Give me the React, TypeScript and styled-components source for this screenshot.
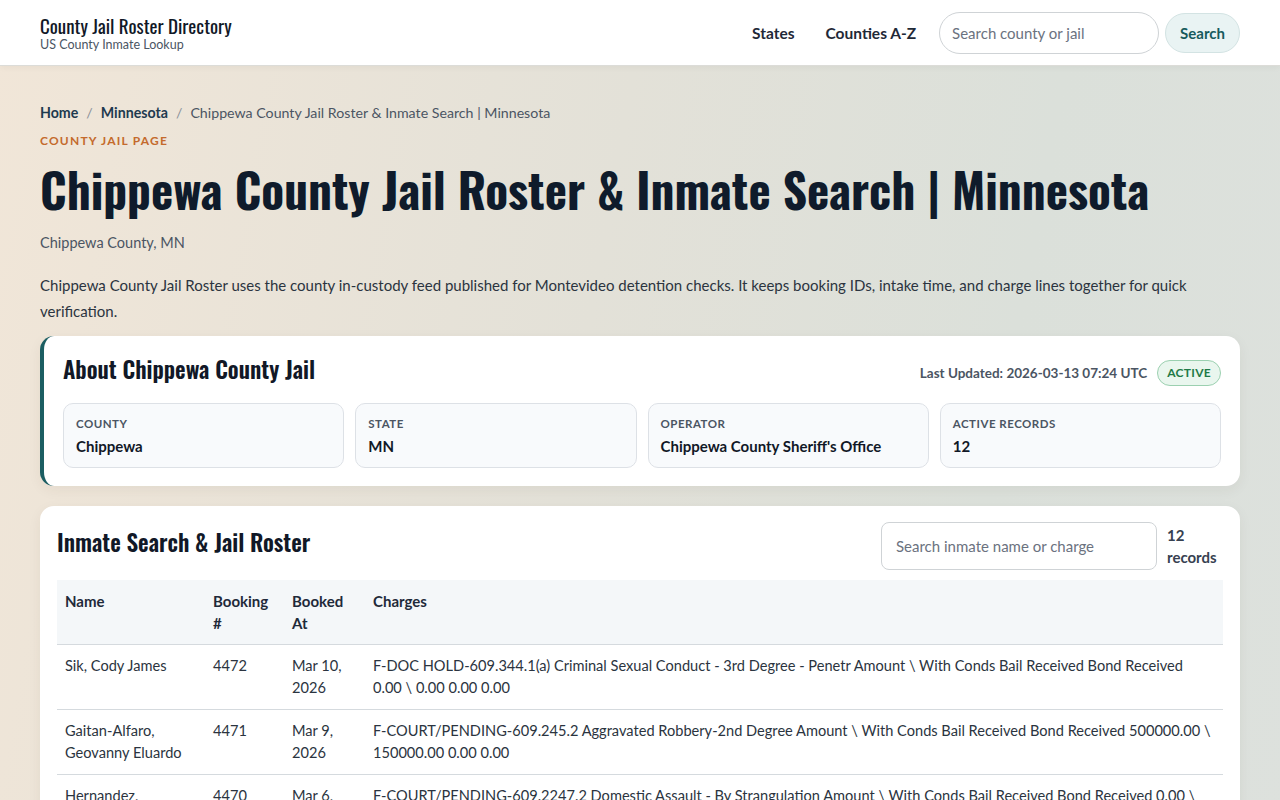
import React from 'react';
import styled, { createGlobalStyle } from 'styled-components';

const GlobalStyle = createGlobalStyle`
  * { box-sizing: border-box; }
  html, body { margin: 0; padding: 0; }
  body {
    font-family: 'Lato', 'Noto Sans', sans-serif;
    color: #1f2937;
    background: linear-gradient(100deg, #f1e6d8 0%, #e3e1d8 45%, #dbe0da 75%, #dde1dd 100%);
    min-height: 100vh;
  }
`;

const HEAD = `'Oswald', 'DejaVu Sans Condensed', 'Liberation Sans', sans-serif`;

const Header = styled.header`
  height: 66px;
  background: #ffffff;
  border-bottom: 1px solid #dcdcd8;
  box-shadow: 0 2px 6px rgba(0, 0, 0, 0.04);
  display: flex;
  align-items: center;
  justify-content: space-between;
  padding: 0 40px;
`;

const Brand = styled.div`
  display: flex;
  flex-direction: column;
`;

const BrandTitle = styled.span`
  font-family: ${HEAD};
  font-size: 19px;
  font-weight: 400;
  line-height: 24px;
  color: #111827;
`;

const BrandSub = styled.span`
  font-size: 12.5px;
  line-height: 16px;
  color: #4b5563;
`;

const Nav = styled.nav`
  display: flex;
  align-items: center;
`;

const NavLink = styled.a`
  font-size: 15.5px;
  font-weight: 700;
  color: #1f2937;
  text-decoration: none;
  margin-left: 31px;
`;

const NavForm = styled.form`
  display: flex;
  align-items: center;
  gap: 6px;
  margin-left: 23px;
`;

const PillInput = styled.input`
  width: 220px;
  height: 42px;
  border: 1px solid #cfd3d6;
  border-radius: 21px;
  padding: 0 12px;
  font-family: inherit;
  font-size: 15px;
  color: #1f2937;
  outline: none;
  &::placeholder { color: #6b7280; }
`;

const PillButton = styled.button`
  height: 40px;
  padding: 0 14px;
  border: 1px solid #d3e3e3;
  border-radius: 20px;
  background: #e9f3f3;
  color: #175a5c;
  font-family: inherit;
  font-size: 15px;
  font-weight: 700;
`;

const Main = styled.main`
  padding: 36px 40px 40px;
`;

const Crumbs = styled.div`
  font-size: 14.2px;
  line-height: 22px;
  color: #4b5563;
  display: flex;
  gap: 8px;
`;

const Crumb = styled.a`
  font-weight: 700;
  color: #1e3a4f;
  text-decoration: none;
`;

const Sep = styled.span`
  color: #8a9099;
`;

const Eyebrow = styled.div`
  margin-top: 9px;
  font-size: 12px;
  font-weight: 700;
  letter-spacing: 1.2px;
  color: #c46a2c;
  line-height: 16px;
`;

const Title = styled.h1`
  margin: 8px 0 0;
  font-family: ${HEAD};
  font-size: 47.3px;
  line-height: 64px;
  font-weight: 700;
  color: #0f1b2b;
  white-space: nowrap;
`;

const Location = styled.div`
  margin-top: 11px;
  font-size: 14.5px;
  line-height: 22px;
  color: #4b5563;
`;

const Intro = styled.p`
  margin: 18px 0 0;
  font-size: 15px;
  line-height: 26px;
  color: #2b3440;
  max-width: 1170px;
`;

const Card = styled.section<{ $accent?: boolean }>`
  margin-top: ${p => (p.$accent ? '12px' : '20px')};
  background: #ffffff;
  border-radius: 14px;
  border-left: ${p => (p.$accent ? '4px solid #1c5e62' : 'none')};
  box-shadow: 0 4px 14px rgba(60, 50, 30, 0.06);
  padding: ${p => (p.$accent ? '16px 19px 18px 19px' : '16px 17px 0')};
  overflow: hidden;
`;

const CardHead = styled.div<{ $top?: boolean }>`
  display: flex;
  align-items: ${p => (p.$top ? 'flex-start' : 'center')};
  justify-content: space-between;
`;

const CardTitle = styled.h2<{ $shift?: number }>`
  margin: ${p => p.$shift ?? 0}px 0 0;
  font-family: ${HEAD};
  font-size: 23px;
  line-height: 34px;
  font-weight: 600;
  color: #111827;
`;

const Meta = styled.div`
  display: flex;
  align-items: center;
  gap: 10px;
  margin-top: 8px;
`;

const Updated = styled.span`
  font-size: 13.5px;
  font-weight: 700;
  color: #4b5563;
`;

const Badge = styled.span`
  font-size: 12px;
  font-weight: 700;
  letter-spacing: 0.3px;
  color: #1f7a47;
  background: #e9f6ee;
  border: 1px solid #9bd0b0;
  border-radius: 13px;
  padding: 5px 9px;
  line-height: 14px;
`;

const Stats = styled.div`
  margin-top: 17px;
  display: grid;
  grid-template-columns: repeat(4, 1fr);
  gap: 11px;
`;

const Stat = styled.div`
  background: #f8fafc;
  border: 1px solid #dde1e6;
  border-radius: 10px;
  height: 65px;
  padding: 12px 12px;
`;

const StatLabel = styled.div`
  font-size: 11.5px;
  font-weight: 700;
  letter-spacing: 0.5px;
  color: #4b5563;
  line-height: 16px;
`;

const StatValue = styled.div`
  margin-top: 4px;
  font-size: 15px;
  font-weight: 700;
  color: #111827;
  line-height: 20px;
`;

const RosterTools = styled.div`
  display: flex;
  align-items: center;
  gap: 10px;
`;

const SearchBox = styled.input`
  width: 276px;
  height: 48px;
  border: 1px solid #cfd3d6;
  border-radius: 8px;
  padding: 0 14px;
  font-family: inherit;
  font-size: 15px;
  outline: none;
  &::placeholder { color: #6b7280; }
`;

const Count = styled.span`
  font-size: 15px;
  font-weight: 700;
  line-height: 22px;
  color: #374151;
  width: 56px;
`;

const Table = styled.table`
  margin-top: 10px;
  width: 100%;
  border-collapse: collapse;
  font-size: 14.6px;
  line-height: 22px;
`;

const Th = styled.th<{ $w?: number }>`
  width: ${p => (p.$w ? `${p.$w}px` : 'auto')};
  text-align: left;
  vertical-align: top;
  padding: 10px 8px;
  background: #f4f7f9;
  font-weight: 700;
  font-size: 15px;
  color: #1f2a3a;
  border-bottom: 1px solid #d5dade;
`;

const Td = styled.td`
  vertical-align: top;
  padding: 10px 8px;
  color: #2b3440;
  border-bottom: 1px solid #d5dade;
`;

const stats = [
  { label: 'County', value: 'Chippewa' },
  { label: 'State', value: 'MN' },
  { label: 'Operator', value: "Chippewa County Sheriff's Office" },
  { label: 'Active Records', value: '12' },
];

const rows = [
  {
    name: 'Sik, Cody James',
    id: '4472',
    date: 'Mar 10, 2026',
    charges: 'F-DOC HOLD-609.344.1(a) Criminal Sexual Conduct - 3rd Degree - Penetr Amount \\ With Conds Bail Received Bond Received 0.00 \\ 0.00 0.00 0.00',
  },
  {
    name: 'Gaitan-Alfaro, Geovanny Eluardo',
    id: '4471',
    date: 'Mar 9, 2026',
    charges: 'F-COURT/PENDING-609.245.2 Aggravated Robbery-2nd Degree Amount \\ With Conds Bail Received Bond Received 500000.00 \\ 150000.00 0.00 0.00',
  },
  {
    name: 'Hernandez, Christopher Lee',
    id: '4470',
    date: 'Mar 6, 2026',
    charges: 'F-COURT/PENDING-609.2247.2 Domestic Assault - By Strangulation Amount \\ With Conds Bail Received Bond Received 0.00 \\ 0.00 0.00 0.00',
  },
];

export default function App() {
  return (
    <>
      <GlobalStyle />
      <Header>
        <Brand>
          <BrandTitle>County Jail Roster Directory</BrandTitle>
          <BrandSub>US County Inmate Lookup</BrandSub>
        </Brand>
        <Nav>
          <NavLink href='#'>States</NavLink>
          <NavLink href='#'>Counties A-Z</NavLink>
          <NavForm onSubmit={e => e.preventDefault()}>
            <PillInput placeholder='Search county or jail' />
            <PillButton type='submit'>Search</PillButton>
          </NavForm>
        </Nav>
      </Header>
      <Main>
        <Crumbs>
          <Crumb href='#'>Home</Crumb>
          <Sep>/</Sep>
          <Crumb href='#'>Minnesota</Crumb>
          <Sep>/</Sep>
          <span>Chippewa County Jail Roster &amp; Inmate Search | Minnesota</span>
        </Crumbs>
        <Eyebrow>COUNTY JAIL PAGE</Eyebrow>
        <Title>Chippewa County Jail Roster &amp; Inmate Search | Minnesota</Title>
        <Location>Chippewa County, MN</Location>
        <Intro>
          Chippewa County Jail Roster uses the county in-custody feed published for Montevideo detention checks. It keeps booking IDs, intake time, and charge lines together for quick verification.
        </Intro>

        <Card $accent>
          <CardHead $top>
            <CardTitle>About Chippewa County Jail</CardTitle>
            <Meta>
              <Updated>Last Updated: 2026-03-13 07:24 UTC</Updated>
              <Badge>ACTIVE</Badge>
            </Meta>
          </CardHead>
          <Stats>
            {stats.map(s => (
              <Stat key={s.label}>
                <StatLabel>{s.label.toUpperCase()}</StatLabel>
                <StatValue>{s.value}</StatValue>
              </Stat>
            ))}
          </Stats>
        </Card>

        <Card>
          <CardHead $top>
            <CardTitle $shift={3}>Inmate Search &amp; Jail Roster</CardTitle>
            <RosterTools>
              <SearchBox placeholder='Search inmate name or charge' />
              <Count>12 records</Count>
            </RosterTools>
          </CardHead>
          <Table>
            <thead>
              <tr>
                <Th $w={148}>Name</Th>
                <Th $w={79}>Booking #</Th>
                <Th $w={81}>Booked At</Th>
                <Th>Charges</Th>
              </tr>
            </thead>
            <tbody>
              {rows.map(r => (
                <tr key={r.id}>
                  <Td>{r.name}</Td>
                  <Td>{r.id}</Td>
                  <Td>{r.date}</Td>
                  <Td>{r.charges}</Td>
                </tr>
              ))}
            </tbody>
          </Table>
        </Card>
      </Main>
    </>
  );
}
